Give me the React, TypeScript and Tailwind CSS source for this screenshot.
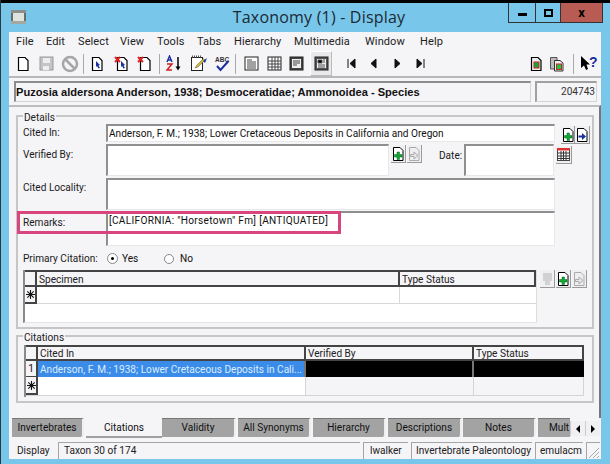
import React from "react";

function Sunken({ className = "", children }: { className?: string; children?: React.ReactNode }) {
  return (
    <div className={"border-t-2 border-l-2 border-t-[#8f8f8f] border-l-[#8f8f8f] border-b border-r border-b-[#e8e8e8] border-r-[#e8e8e8] bg-white overflow-hidden whitespace-nowrap " + className}>
      {children}
    </div>
  );
}

function Page({ plus, arrow, dim }: { plus?: boolean; arrow?: string; dim?: boolean }) {
  return (
    <svg width="12" height="14" viewBox="0 0 12 14">
      <path d="M1.500 .5H8L11 3.500V13.500H1.500Z" fill={dim ? "#eee" : "#fff"} stroke={dim ? "#aaa" : "#000"} />
      {plus && <path d="M5 5h2.500v2.500H10V10H7.500v2.500H5V10H2.500V7.500H5Z" fill="#11a82c" stroke="#063" strokeWidth=".5" />}
      {arrow && <path d="M2.500 7.500H6V5L10 8.500 6 12V9.500H2.500Z" fill={arrow} stroke={dim ? "#aaa" : "none"} />}
    </svg>
  );
}

function Btn({ className = "", children }: { className?: string; children?: React.ReactNode }) {
  return (
    <div className={"h-[18px] flex items-center justify-center bg-[#f0eff2] border-r border-b border-r-[#9a9a9a] border-b-[#9a9a9a] " + className}>
      {children}
    </div>
  );
}

function Sep({ className }: { className: string }) {
  return <div className={"w-px h-[20px] bg-[#a8a8a8] shrink-0 " + className} />;
}

function Slot({ className, children }: { className: string; children: React.ReactNode }) {
  return <div className={"h-[24px] flex items-center justify-center shrink-0 " + className}>{children}</div>;
}

const Doc = ({ children, fill = "#fff" }: { children?: React.ReactNode; fill?: string }) => (
  <svg width="16" height="16" viewBox="0 0 16 16">
    <path d="M3.500 1.500H10L13 4.500V14.500H3.500Z" fill={fill} stroke="#000" strokeWidth="1.200" />
    {children}
  </svg>
);

const Toolbar = () => (
  <div className="h-[25px] flex items-center pl-[3px] bg-[#f5f4f7] border-b-2 border-b-[#b8b8b8] box-content">
    <Slot className="w-[22px]"><Doc /></Slot>
    <Slot className="w-[24px]">
      <svg width="15" height="15" viewBox="0 0 15 15"><rect x="1" y="1" width="13" height="13" fill="#c4c4c4" stroke="#9a9a9a" /><rect x="4" y="2" width="7" height="5" fill="#eee" /><rect x="4" y="10" width="6" height="4" fill="#eee" /></svg>
    </Slot>
    <Slot className="w-[24px]">
      <svg width="18" height="18" viewBox="0 0 18 18"><circle cx="9" cy="9" r="7" fill="none" stroke="#a6a6a6" strokeWidth="2.500" /><path d="M4 4L14 14" stroke="#a6a6a6" strokeWidth="2.500" /></svg>
    </Slot>
    <Sep className="ml-[1px] mr-[1px]" />
    <Slot className="w-[24px]"><Doc><path d="M7 5L11 9 9.500 9.500 11 12 9.500 12.500 8 10 7 11Z" fill="#1a2fa0" /></Doc></Slot>
    <Slot className="w-[25px]"><Doc><path d="M1 1L6 6M6 1L1 6" stroke="#d22" strokeWidth="2" /><path d="M7 5L11 9 9.500 9.500 11 12 9.500 12.500 8 10 7 11Z" fill="#1a2fa0" /></Doc></Slot>
    <Slot className="w-[22px]"><Doc><path d="M1 1L6 6M6 1L1 6" stroke="#d22" strokeWidth="2" /></Doc></Slot>
    <Sep className="ml-[3px] mr-[2px]" />
    <Slot className="w-[24px]">
      <svg width="16" height="17" viewBox="0 0 16 17"><path d="M1 7L3.500 1 6 7M2 5H5" fill="none" stroke="#1a2fa0" strokeWidth="1.400" /><path d="M1 9H6L1 15H6" fill="none" stroke="#c22" strokeWidth="1.500" /><path d="M12 2V13" stroke="#000" strokeWidth="1.500" /><path d="M9.500 11.500H14.500L12 15.500Z" fill="#000" /></svg>
    </Slot>
    <Slot className="w-[26px]">
      <svg width="18" height="17" viewBox="0 0 18 17"><rect x="1.500" y="2.500" width="11" height="13" fill="#fff" stroke="#222" /><path d="M2 1.500H12" stroke="#555" strokeDasharray="1 1" strokeWidth="2" /><path d="M5 13L8 12 15 5 13.500 3.500 6.500 10.500Z" fill="#d8b92c" stroke="#555" strokeWidth=".5" /><path d="M13 6L17 3 15 8Z" fill="#123a9c" /></svg>
    </Slot>
    <Slot className="w-[20px]">
      <svg width="17" height="17" viewBox="0 0 17 17"><text x="1" y="6.500" fontSize="6.500" fontWeight="700" fontFamily="Liberation Sans" fill="#333">ABC</text><path d="M3 11L6.500 15 14.500 6" fill="none" stroke="#1a2fa0" strokeWidth="2" /></svg>
    </Slot>
    <Sep className="ml-[3px] mr-[3px]" />
    <Slot className="w-[24px]">
      <svg width="15" height="15" viewBox="0 0 15 15"><rect x="1" y="1" width="13" height="13" fill="#fff" stroke="#222" /><path d="M3 4H8M3 6H12M3 8H12M3 10H12M3 12H12" stroke="#444" /></svg>
    </Slot>
    <Slot className="w-[22px]">
      <svg width="15" height="15" viewBox="0 0 15 15"><rect x="1" y="1" width="13" height="13" fill="#fff" stroke="#222" /><path d="M1 5H14M1 8H14M1 11H14M5 1V14M8 1V14M11 1V14" stroke="#444" /></svg>
    </Slot>
    <Slot className="w-[22px]">
      <svg width="15" height="15" viewBox="0 0 15 15"><rect x="1" y="1" width="13" height="13" fill="#444" stroke="#222" /><rect x="3" y="3" width="9" height="9" fill="#eee" /><path d="M4 5H11M4 7H11M4 9H8" stroke="#444" /></svg>
    </Slot>
    <div className="w-[22px] h-[25px] ml-[3px] flex items-center justify-center bg-[#e9e8ea] border border-[#fff] border-r-[#bbb] border-b-[#bbb] shrink-0">
      <svg width="15" height="15" viewBox="0 0 15 15"><rect x="1" y="1" width="13" height="13" fill="#555" stroke="#222" /><rect x="3" y="3" width="9" height="9" fill="#eee" /><path d="M4 4H8V7H4ZM9 4H11M9 6H11M4 9H11M4 11H11" stroke="#555" /></svg>
    </div>
    <div className="w-[7px] shrink-0" />
    <Slot className="w-[24px]"><svg width="10" height="11" viewBox="0 0 10 11"><path d="M2 1V10M9 1V10L4 5.500Z" fill="#111" stroke="#111" /></svg></Slot>
    <Slot className="w-[22px]"><svg width="10" height="11" viewBox="0 0 10 11"><path d="M7 1V10L2 5.500Z" fill="#111" stroke="#111" /></svg></Slot>
    <Slot className="w-[26px]"><svg width="10" height="11" viewBox="0 0 10 11"><path d="M2 1V10L7 5.500Z" fill="#111" stroke="#111" /></svg></Slot>
    <Slot className="w-[20px]"><svg width="10" height="11" viewBox="0 0 10 11"><path d="M1 1V10L6 5.500ZM8 1V10" fill="#111" stroke="#111" /></svg></Slot>
    <div className="w-[94px] shrink-0" />
    <Slot className="w-[22px]"><Doc fill="#eee"><rect x="6" y="6" width="5" height="6" fill="#1a3" stroke="#c22" /></Doc></Slot>
    <Slot className="w-[20px]">
      <svg width="16" height="16" viewBox="0 0 16 16"><path d="M1.500 1.500H8V13H1.500Z" fill="#bbb" stroke="#555" /><path d="M5.500 4.500H11L14 7V15H5.500Z" fill="#eee" stroke="#333" /><rect x="7.500" y="8" width="5" height="5.500" fill="#1c4" stroke="#c22" /></svg>
    </Slot>
    <Sep className="ml-[6px] mr-[6px]" />
    <svg width="19" height="17" viewBox="0 0 19 17"><path d="M1 1V13L4 10.500 6 15 8 14 6.500 9.500 10 9.500Z" fill="#000" /><text x="9" y="12" fontSize="14" fontWeight="700" fontFamily="Liberation Sans" fill="#1a2fa0">?</text></svg>
  </div>
);

const Label = ({ children, className = "" }: { children: React.ReactNode; className?: string }) => (
  <div className={"text-[10.1px] leading-[13px] text-[#1a1a1a] whitespace-nowrap " + className}>{children}</div>
);

const Star = () => (
  <svg width="9" height="9" viewBox="0 0 9 9"><path d="M4.500 0V9M0 4.500H9M1.300 1.300L7.700 7.700M7.700 1.300L1.300 7.700" stroke="#111" strokeWidth="1.100" /></svg>
);

const Cell = ({ children, className = "" }: { children?: React.ReactNode; className?: string }) => (
  <div className={"h-full flex items-center pl-[2px] text-[10.1px] overflow-hidden whitespace-nowrap shrink-0 " + className}>{children}</div>
);

const Tab = ({ className, label }: { className: string; label: string }) => (
  <div className={"h-[19px] flex items-center justify-center text-[10.1px] bg-[#a3a3a3] border-t border-t-[#777] border-r-2 border-r-[#efefef] rounded-br-[3px] shrink-0 overflow-hidden text-[#111] " + className}>
    {label}
  </div>
);

function Status({ className, children, grip }: { className: string; children?: React.ReactNode; grip?: boolean }) {
  return (
    <div className={"h-[17px] flex items-center pl-[5px] text-[10.1px] text-[#222] border-t border-l border-t-[#a5a5a5] border-l-[#a5a5a5] whitespace-nowrap shrink-0 overflow-hidden relative " + className}>
      {children}
      {grip && (
        <svg className="absolute right-0 bottom-0" width="12" height="12" viewBox="0 0 12 12"><path d="M11 1L1 11M11 5L5 11M11 9L9 11" stroke="#aaa" /></svg>
      )}
    </div>
  );
}

export default function App() {
  return (
    <div className="w-[610px] h-[464px] bg-[#78c6ea] overflow-hidden flex flex-col text-[#111] relative border-l border-l-[#2a3a44] [font-family:Roboto,Arial,sans-serif]">
      <div className="h-[3px] bg-black shrink-0" />
      {/* title bar */}
      <div className="h-[29px] shrink-0 flex items-start relative">
        <div className="ml-[10px] mt-[7px] w-[15px] h-[14px] shrink-0 flex flex-col">
          <div className="h-[3px] bg-[#8a8f8a]" />
          <div className="h-[8px] bg-[#dfe3df] border-x-2 border-[#667066]" />
          <div className="h-[3px] bg-[#a3a9a0]" />
        </div>
        <div className="flex-1 text-center text-[16px] leading-[20px] mt-[4px] pl-[104px] text-[#1c2a33] [font-family:'Open_Sans',sans-serif] tracking-[0.2px]">Taxonomy (1) - Display</div>
        <div className="flex h-[20px] mr-[7px] border-x border-b border-[#333] shrink-0">
          <div className="w-[27px] flex items-center justify-center border-r border-[#333]"><div className="w-[9px] h-[3px] bg-black mt-[3px]" /></div>
          <div className="w-[25px] flex items-center justify-center border-r border-[#333]"><div className="w-[9px] h-[8px] border-2 border-black" /></div>
          <div className="w-[41px] flex items-center justify-center bg-[#b85c53] text-[13px] font-bold text-black">x</div>
        </div>
      </div>
      {/* client */}
      <div className="ml-[8px] w-[592px] h-[427px] bg-[#f5f4f7] flex flex-col shrink-0">
        <div className="h-[19px] flex items-center pl-[7px] pt-[1px] text-[11px] tracking-[0.1px] text-[#222] shrink-0">
          <span className="w-[30px]">File</span>
          <span className="w-[32px]">Edit</span>
          <span className="w-[42px]">Select</span>
          <span className="w-[37px]">View</span>
          <span className="w-[40px]">Tools</span>
          <span className="w-[37px]">Tabs</span>
          <span className="w-[60px]">Hierarchy</span>
          <span className="w-[71px]">Multimedia</span>
          <span className="w-[55px]">Window</span>
          <span>Help</span>
        </div>
        <Toolbar />
        {/* record title */}
        <div className="flex h-[21px] mt-[3px] ml-[5px] gap-[4px] shrink-0">
          <div className="w-[517px] h-[21px] border-t-2 border-l-2 border-[#8c8c8c] border-r border-b border-r-[#d4d4d4] border-b-[#d4d4d4] flex items-center text-[11.1px] font-bold text-[#111] whitespace-nowrap overflow-hidden [font-family:'Liberation_Sans',Arial,sans-serif]">
            Puzosia aldersona Anderson, 1938; Desmoceratidae; Ammonoidea - Species
          </div>
          <div className="w-[62px] h-[21px] border-t-2 border-l-2 border-[#a0a0a0] border-r border-b border-r-[#d4d4d4] border-b-[#d4d4d4] flex items-center justify-end pr-[1px] text-[10.1px] text-[#333]">204743</div>
        </div>
        {/* tab page */}
        <div className="mt-[3px] w-[592px] h-[313px] shrink-0 border-t-2 border-r-2 border-t-[#bdbdbd] border-r-[#777] pl-[7px] pt-[8px] flex flex-col">
          {/* Details */}
          <div className="w-[578px] h-[214px] border-2 border-[#c6c6c6] relative shrink-0 pl-[5px]">
            <div className="absolute left-[5px] -top-[6px] bg-[#f5f4f7] px-[1px] text-[10.1px] leading-[13px] text-[#222]">Details</div>
            <div className="flex h-[18px] mt-[7px]">
              <Label className="w-[83px] pt-[2px]">Cited In:</Label>
              <Sunken className="w-[449px] text-[10.1px] pl-[1px] leading-[15px]">Anderson, F. M.; 1938; Lower Cretaceous Deposits in California and Oregon</Sunken>
              <div className="flex ml-[6px] mt-[2px]">
                <Btn className="w-[14px]"><Page plus /></Btn>
                <Btn className="w-[15px]"><Page arrow="#1a2fa0" /></Btn>
              </div>
            </div>
            <div className="flex h-[32px] mt-[2px]">
              <Label className="w-[83px] pt-[4px]">Verified By:</Label>
              <Sunken className="w-[283px]" />
              <div className="flex ml-[2px] mt-[1px] h-[18px] gap-px">
                <Btn className="w-[15px]"><Page plus /></Btn>
                <Btn className="w-[15px]"><Page arrow="#e8e8e8" dim /></Btn>
              </div>
              <Label className="ml-[17px] w-[25px] pt-[5px]">Date:</Label>
              <Sunken className="w-[90px]" />
              <div className="ml-[2px] mt-[2px]">
                <Btn className="w-[16px]">
                  <svg width="13" height="13" viewBox="0 0 13 13"><rect x=".5" y="1" width="12" height="11.500" fill="#fff" stroke="#444" /><rect x="0" y="0" width="13" height="2.500" fill="#d33" /><path d="M1 5H12M1 8H12M1 10.500H12M4 3V12M6.500 3V12M9 3V12" stroke="#333" /></svg>
                </Btn>
              </div>
            </div>
            <div className="flex h-[32px] mt-[2px]">
              <Label className="w-[83px] pt-[3px]">Cited Locality:</Label>
              <Sunken className="w-[449px]" />
            </div>
            <div className="flex h-[35px] mt-[1px]">
              <Label className="w-[83px] pt-[5px]">Remarks:</Label>
              <Sunken className="w-[449px] text-[10.1px] tracking-[0.3px] pl-[1px] leading-[15px]">[CALIFORNIA: "Horsetown" Fm] [ANTIQUATED]</Sunken>
            </div>
            <div className="flex items-center h-[13px] mt-[6px]">
              <Label className="w-[84px]">Primary Citation:</Label>
              <div className="w-[11px] h-[11px] rounded-full border border-[#888] bg-white flex items-center justify-center"><div className="w-[3px] h-[3px] rounded-full bg-black" /></div>
              <span className="text-[10.1px] ml-[4px] w-[35px]">Yes</span>
              <div className="w-[10px] h-[10px] ml-[7px] rounded-full border border-[#888] bg-white" />
              <span className="text-[10.1px] ml-[6px]">No</span>
            </div>
            <div className="flex mt-[5px]">
              <div className="w-[514px] h-[53px] border-l-2 border-l-[#8a8a8a] border-r border-r-[#ddd] border-b border-b-[#e4e4e4] bg-white flex flex-col">
                <div className="h-[13px] flex border-t-2 border-b-2 border-[#444] bg-[#f5f4f7] box-content shrink-0">
                  <div className="w-[12px] border-r-2 border-r-[#444] shrink-0" />
                  <Cell className="w-[363px] border-r-2 border-r-[#444] text-[#222] pt-[2px]">Specimen</Cell>
                  <Cell className="w-[136px] border-r-2 border-r-[#444] text-[#222] pt-[2px]">Type Status</Cell>
                </div>
                <div className="h-[17px] flex border-b border-b-[#d8d8d8] shrink-0">
                  <div className="w-[12px] bg-[#f5f4f7] flex items-center justify-center border-r-2 border-b-2 border-[#444] h-[17px] shrink-0"><Star /></div>
                  <Cell className="w-[363px] border-r border-r-[#d8d8d8]" />
                </div>
              </div>
              <div className="flex ml-[3px] h-[18px] gap-px">
                <Btn className="w-[15px] bg-[#e9e9eb]"><svg width="11" height="14" viewBox="0 0 11 14"><path d="M1 2H10M1 4H10M1 6H10M1 8H10M3 10H8M3 12H8" stroke="#b3b3b3" /></svg></Btn>
                <Btn className="w-[15px]"><Page plus /></Btn>
                <Btn className="w-[15px]"><Page arrow="#e8e8e8" dim /></Btn>
              </div>
            </div>
          </div>
          {/* Citations */}
          <div className="w-[578px] h-[68px] mt-[6px] border-2 border-[#c6c6c6] relative shrink-0 pl-[6px]">
            <div className="absolute left-[5px] -top-[6px] bg-[#f5f4f7] px-[1px] text-[10.1px] leading-[13px] text-[#222]">Citations</div>
            <div className="w-[560px] h-[52px] mt-[8px] border-l-2 border-l-[#8a8a8a] flex flex-col overflow-hidden">
              <div className="h-[12px] flex border-t-2 border-b-2 border-[#444] box-content shrink-0">
                <div className="w-[12px] border-r-2 border-r-[#444] shrink-0" />
                <Cell className="w-[268px] border-r-2 border-r-[#444] text-[#222] pt-[2px]">Cited In</Cell>
                <Cell className="w-[168px] border-r-2 border-r-[#444] text-[#222] pt-[2px]">Verified By</Cell>
                <Cell className="w-[110px] border-r-2 border-r-[#444] text-[#222] pt-[2px]">Type Status</Cell>
              </div>
              <div className="h-[16px] flex bg-black shrink-0">
                <div className="w-[12px] bg-[#f5f4f7] flex items-center justify-center text-[10.1px] border-r-2 border-r-[#444] border-b border-b-[#444] shrink-0 pt-[1px]">1</div>
                <Cell className="w-[268px] bg-[#3a8ce8] text-[#dcecff] border-r-2 border-r-[#777] pt-[2px]">Anderson, F. M.; 1938; Lower Cretaceous Deposits in Cali...</Cell>
                <Cell className="w-[168px] border-r-2 border-r-[#777]" />
                <Cell className="w-[110px]" />
              </div>
              <div className="h-[19px] flex shrink-0 border-b border-b-[#d4d4d4]">
                <div className="w-[12px] flex items-center justify-center border-r-2 border-b-2 border-r-[#444] border-b-[#444] shrink-0"><Star /></div>
                <Cell className="w-[268px] bg-white border-r border-r-[#d4d4d4]" />
                <Cell className="w-[168px] border-r border-r-[#d4d4d4]" />
                <Cell className="w-[110px] border-r border-r-[#d4d4d4]" />
              </div>
            </div>
          </div>
        </div>
        {/* tabs */}
        <div className="flex items-start h-[23px] pl-[3px] shrink-0">
          <Tab className="w-[72px]" label="Invertebrates" />
          <div className="w-[76px] h-[20px] ml-[2px] flex items-center justify-center text-[10.1px] bg-[#f5f4f7] border-b-2 border-b-[#a0a0a0] shrink-0 pt-[2px]">Citations</div>
          <Tab className="w-[74px]" label="Validity" />
          <Tab className="w-[73px] ml-[2px]" label="All Synonyms" />
          <Tab className="w-[73px] ml-[2px]" label="Hierarchy" />
          <Tab className="w-[74px] ml-[2px]" label="Descriptions" />
          <Tab className="w-[73px] ml-[1px]" label="Notes" />
          <div className="w-[32px] h-[19px] ml-[2px] bg-[#a3a3a3] border-t border-t-[#777] flex items-center pl-[11px] text-[10.1px] overflow-hidden shrink-0 whitespace-nowrap">Mult</div>
          <div className="flex mt-[3px]">
            <div className="w-[15px] h-[15px] bg-[#f0eff2] flex items-center justify-center border-l border-[#ccc]"><div className="w-0 h-0 border-y-[4px] border-y-transparent border-r-[4px] border-r-black" /></div>
            <div className="w-[15px] h-[15px] bg-[#f0eff2] flex items-center justify-center border-l border-[#ccc]"><div className="w-0 h-0 border-y-[4px] border-y-transparent border-l-[4px] border-l-black" /></div>
          </div>
        </div>
        {/* status */}
        <div className="flex items-end h-[18px] shrink-0 pl-[7px]">
          <div className="w-[41px] h-[17px] mr-[1px] flex items-center text-[10.1px] text-[#222] shrink-0 pl-[1px]">Display</div>
          <Status className="w-[302px] mr-[3px]">Taxon 30 of 174</Status>
          <Status className="w-[45px] mr-[3px] !pl-[6px]">lwalker</Status>
          <Status className="w-[121px] mr-[3px] !pl-[4px]">Invertebrate Paleontology</Status>
          <Status className="w-[48px] mr-[3px] !pl-[4px]">emulacm</Status>
          <Status className="w-[14px]" grip />
        </div>
      </div>
      {/* annotation */}
      <div className="absolute left-[16px] top-[211px] w-[324px] h-[23px] border-[3px] border-[#d9467f] pointer-events-none" />
    </div>
  );
}
